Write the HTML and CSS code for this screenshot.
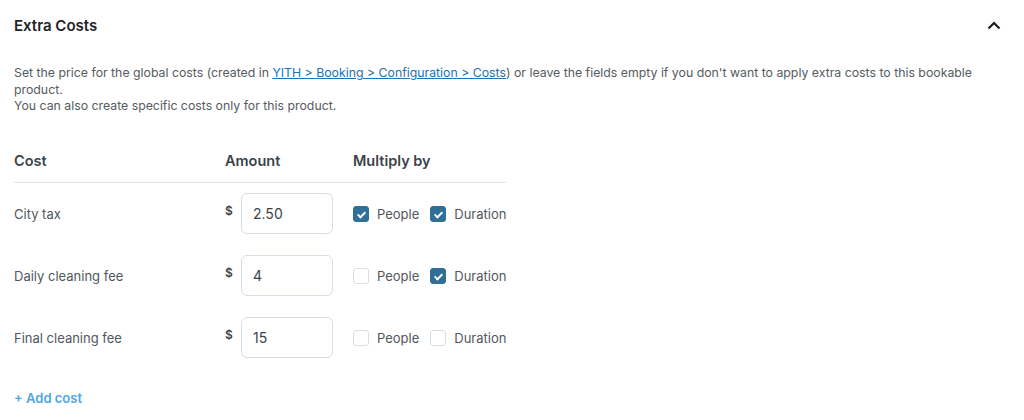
FILE: index.html
```html
<!DOCTYPE html>
<html lang="en">

<head>
    <meta charset="UTF-8" />
    <meta name="viewport" content="width=device-width, initial-scale=1.0" />
    <title>Extra Costs</title>
    <link rel="stylesheet" href="styles.css">
</head>

<body>
    <div class="panel">
        <div class="panel-head">
            <h2 class="panel-title">Extra Costs</h2>
            <svg class="toggle" width="14" height="9" viewBox="0 0 14 9">
                <path d="M1.5 7.5 L7 2 L12.5 7.5" fill="none" stroke="#1e1e1e" stroke-width="2.2" />
            </svg>
        </div>

        <p class="desc">
            <span>Set the price for the global costs (created in <a href="#">YITH &gt; Booking &gt; Configuration &gt; Costs</a>) or leave the fields empty if you don't want to apply extra costs to this bookable</span>
            <span>product.</span>
            <span>You can also create specific costs only for this product.</span>
        </p>

        <div class="costs">
            <div class="costs-head">
                <span>Cost</span>
                <span>Amount</span>
                <span>Multiply by</span>
            </div>

            <div class="cost-row">
                <span class="cost-name">City tax</span>
                <div class="amount">
                    <span class="currency">$</span>
                    <input type="text" value="2.50" />
                </div>
                <div class="multiply">
                    <label><span class="check on"></span>People</label>
                    <label><span class="check on"></span>Duration</label>
                </div>
            </div>

            <div class="cost-row">
                <span class="cost-name">Daily cleaning fee</span>
                <div class="amount">
                    <span class="currency">$</span>
                    <input type="text" value="4" />
                </div>
                <div class="multiply">
                    <label><span class="check"></span>People</label>
                    <label><span class="check on"></span>Duration</label>
                </div>
            </div>

            <div class="cost-row">
                <span class="cost-name">Final cleaning fee</span>
                <div class="amount">
                    <span class="currency">$</span>
                    <input type="text" value="15" />
                </div>
                <div class="multiply">
                    <label><span class="check"></span>People</label>
                    <label><span class="check"></span>Duration</label>
                </div>
            </div>
        </div>

        <a class="add-cost" href="#">+ Add cost</a>
    </div>
</body>

</html>
```

FILE: styles.css
```css
body {
    margin: 0;
    padding: 0;
    background: #fff;
    font-family: 'Inter', 'Noto Sans', sans-serif;
    color: #50575e;
}

.panel {
    padding: 0 14px;
}

.panel-head {
    height: 50px;
    display: flex;
    align-items: center;
    justify-content: space-between;
    padding-right: 9px;
}

.panel-title {
    margin: 0;
    font-size: 15px;
    font-weight: 600;
    color: #1d2327;
}

.toggle {
    display: block;
}

.desc {
    margin: 15px 0 0;
    font-size: 12.3px;
    line-height: 16.5px;
    color: #555b61;
}

.desc span {
    display: block;
}

.desc a {
    color: #2271b1;
    text-decoration: underline;
}

.costs {
    width: 492px;
    margin-top: 37px;
}

.costs-head,
.cost-row {
    display: grid;
    grid-template-columns: 211px 128px 1fr;
    align-items: center;
}

.costs-head {
    height: 30px;
    border-bottom: 1px solid #e2e4e7;
    align-items: start;
    font-size: 14.5px;
    font-weight: 600;
    color: #3c434a;
}

.cost-row {
    height: 62px;
    font-size: 13px;
}

.cost-name {
    color: #50575e;
}

.amount {
    display: flex;
    align-items: center;
}

.currency {
    width: 16px;
    font-size: 12px;
    font-weight: 600;
    color: #3c434a;
    margin-top: -6px;
}

.amount input {
    width: 92px;
    height: 41px;
    box-sizing: border-box;
    border: 1px solid #d8dde6;
    border-radius: 6px;
    padding: 0 11px;
    font-family: inherit;
    font-size: 14px;
    color: #3c434a;
    outline: none;
}

.multiply {
    display: flex;
    align-items: center;
    gap: 11px;
}

.multiply label {
    display: flex;
    align-items: center;
    gap: 8px;
    font-size: 13px;
    color: #50575e;
}

.check {
    width: 16px;
    height: 16px;
    box-sizing: border-box;
    border: 1px solid #dadee4;
    border-radius: 3px;
    background: #fff;
    position: relative;
}

.check.on {
    background: #2f6f98;
    border-color: #2f6f98;
}

.check.on::after {
    content: "";
    position: absolute;
    left: 5px;
    top: 3px;
    width: 3px;
    height: 6px;
    border: solid #fff;
    border-width: 0 2px 2px 0;
    transform: rotate(45deg);
}

.add-cost {
    display: inline-block;
    margin-top: 21px;
    font-size: 13px;
    font-weight: 600;
    color: #4ca6e8;
    text-decoration: none;
}
```
